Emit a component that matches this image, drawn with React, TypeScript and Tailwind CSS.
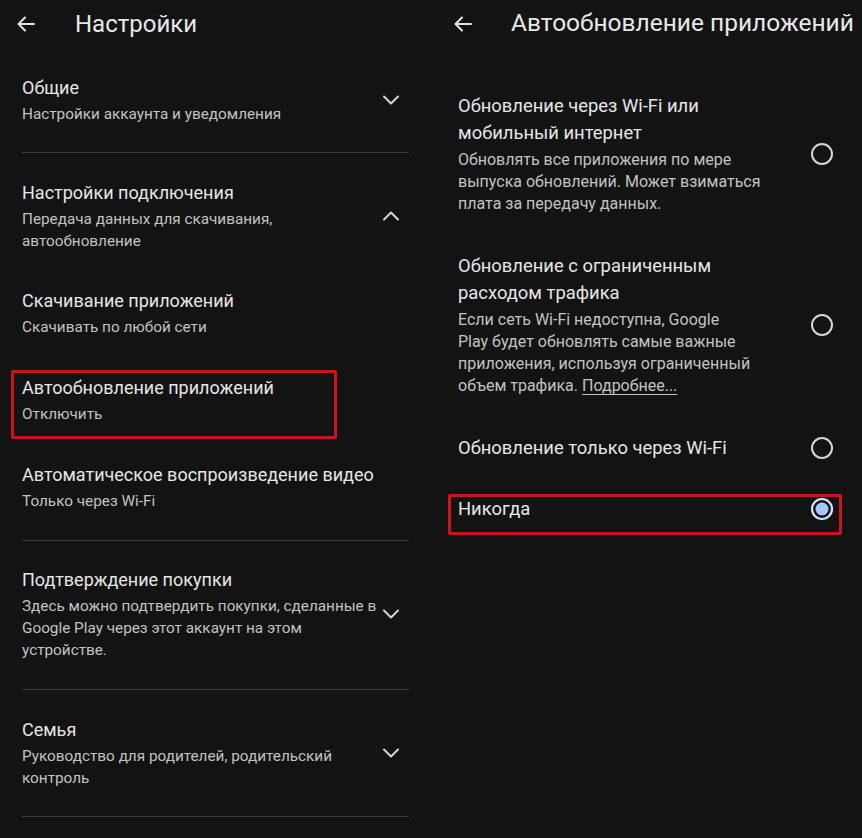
import type { ReactNode } from 'react';

const font = { fontFamily: 'Roboto, "Noto Sans", sans-serif' };

function BackArrow() {
  return (
    <svg width="18" height="16" viewBox="0 0 18 16" fill="none" stroke="#e3e3e3" strokeWidth="2" strokeLinecap="round" strokeLinejoin="round">
      <path d="M17 8H2" />
      <path d="M8 1.5L1.5 8L8 14.5" />
    </svg>
  );
}

function Chevron({ up }: { up?: boolean }) {
  return (
    <svg width="18" height="10" viewBox="0 0 18 10" fill="none" stroke="#d6d6d6" strokeWidth="2" strokeLinecap="round" strokeLinejoin="round">
      {up ? <path d="M2 8.5L9 1.5L16 8.5" /> : <path d="M2 1.5L9 8.5L16 1.5" />}
    </svg>
  );
}

function Radio({ checked }: { checked?: boolean }) {
  return checked ? (
    <svg width="24" height="24" viewBox="0 0 24 24">
      <circle cx="12" cy="12" r="10" fill="none" stroke="#d3e3fd" strokeWidth="2.2" />
      <circle cx="12" cy="12" r="6.5" fill="#a8c7fa" />
    </svg>
  ) : (
    <svg width="24" height="24" viewBox="0 0 24 24">
      <circle cx="12" cy="12" r="10" fill="none" stroke="#d6d6d6" strokeWidth="2" />
    </svg>
  );
}

function Divider() {
  return <div className="mx-[22px] h-px bg-[#3d3d3d]" />;
}

function Item({ title, sub, className = '' }: { title: string; sub: ReactNode; className?: string }) {
  return (
    <div className={className}>
      <div className="text-[18px] leading-[26px] text-[#e6e6e6]">{title}</div>
      <div className="mt-[2px] text-[15.3px] leading-[22px] text-[#c2c2c2]">{sub}</div>
    </div>
  );
}

function Section({ children, chevron, up, className = '' }: { children: ReactNode; chevron?: boolean; up?: boolean; className?: string }) {
  return (
    <div className={`flex items-center justify-between pl-[22px] pr-[31px] ${className}`}>
      <div>{children}</div>
      {chevron && <Chevron up={up} />}
    </div>
  );
}

function LeftPanel() {
  return (
    <div className="w-[431px] h-[838px] bg-[#131313]">
      <div className="h-[48px] flex items-center pl-[17px]">
        <BackArrow />
        <span className="ml-[40px] text-[24px] text-[#e8e8e8]">Настройки</span>
      </div>

      <Section chevron className="pt-[27px] pb-[27px]">
        <Item title="Общие" sub="Настройки аккаунта и уведомления" />
      </Section>
      <Divider />

      <Section chevron up className="pt-[27px]">
        <Item title="Настройки подключения" sub={<>Передача данных для скачивания,<br />автообновление</>} />
      </Section>
      <div className="pl-[22px]">
        <Item title="Скачивание приложений" sub="Скачивать по любой сети" className="pt-[36px]" />
        <div className="relative mt-[37px]">
          <Item title="Автообновление приложений" sub="Отключить" />
          <div className="absolute left-[-11px] top-[-5px] w-[326px] h-[69px] border-[3px] border-[#cc141c] rounded-[2px]" />
        </div>
        <Item title="Автоматическое воспроизведение видео" sub="Только через Wi-Fi" className="pt-[37px] pb-[28px]" />
      </div>
      <Divider />

      <Section chevron className="pt-[26px] pb-[28px]">
        <Item
          title="Подтверждение покупки"
          sub={<>Здесь можно подтвердить покупки, сделанные в<br />Google Play через этот аккаунт на этом<br />устройстве.</>}
        />
      </Section>
      <Divider />

      <Section chevron className="pt-[27px] pb-[27px]">
        <Item title="Семья" sub={<>Руководство для родителей, родительский<br />контроль</>} />
      </Section>
      <Divider />
    </div>
  );
}

function Option({ title, sub, checked, className = '' }: { title: ReactNode; sub?: ReactNode; checked?: boolean; className?: string }) {
  return (
    <div className={`flex items-center justify-between pl-[27px] pr-[28px] ${className}`}>
      <div>
        <div className="text-[18.4px] leading-[27px] text-[#e6e6e6]">{title}</div>
        {sub && <div className="mt-[3px] text-[16px] leading-[22px] text-[#c2c2c2]">{sub}</div>}
      </div>
      <Radio checked={checked} />
    </div>
  );
}

function RightPanel() {
  return (
    <div className="w-[431px] h-[838px] bg-[#131313]">
      <div className="h-[47px] flex items-center pl-[23px]">
        <BackArrow />
        <span className="ml-[39px] text-[24.5px] text-[#e8e8e8] whitespace-nowrap">Автообновление приложений</span>
      </div>

      <Option
        className="mt-[45px]"
        title={<>Обновление через Wi-Fi или<br />мобильный интернет</>}
        sub={<>Обновлять все приложения по мере<br />выпуска обновлений. Может взиматься<br />плата за передачу данных.</>}
      />
      <Option
        className="mt-[37px]"
        title={<>Обновление с ограниченным<br />расходом трафика</>}
        sub={
          <>
            Если сеть Wi-Fi недоступна, Google<br />Play будет обновлять самые важные<br />приложения, используя ограниченный<br />
            объем трафика. <span className="underline underline-offset-[3px]">Подробнее...</span>
          </>
        }
      />
      <Option className="mt-[37px]" title="Обновление только через Wi-Fi" />
      <div className="relative mt-[34px]">
        <Option title="Никогда" checked />
        <div className="absolute left-[17px] top-[-1px] w-[394px] h-[41px] border-[3px] border-[#cc141c] rounded-[2px]" />
      </div>
    </div>
  );
}

export default function App() {
  return (
    <div className="flex w-[862px] h-[838px] bg-[#131313] overflow-hidden" style={font}>
      <LeftPanel />
      <RightPanel />
    </div>
  );
}
